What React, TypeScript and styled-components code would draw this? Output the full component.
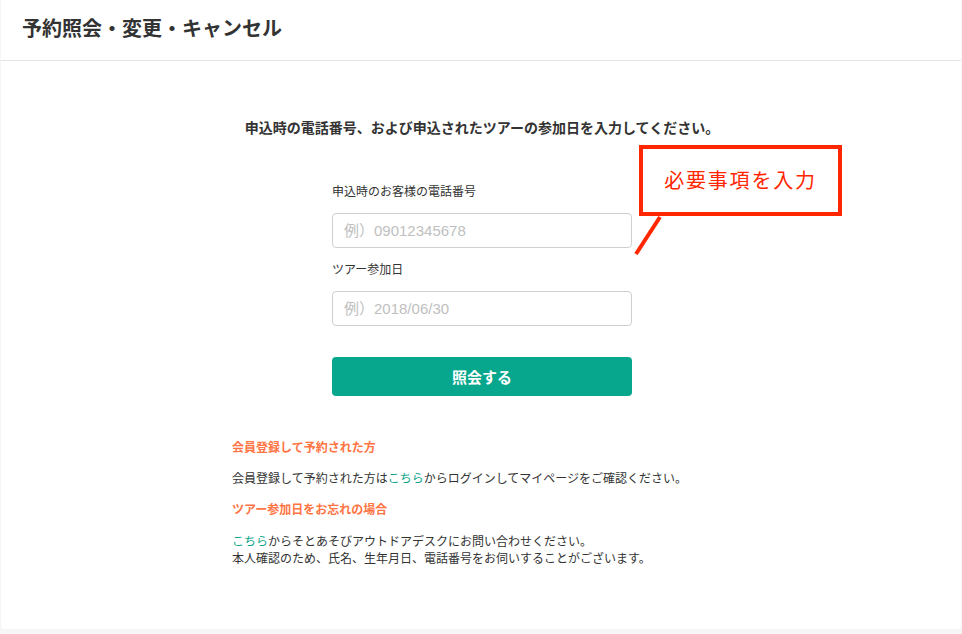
import React from "react";
import styled, { createGlobalStyle } from "styled-components";

const Global = createGlobalStyle`
  html, body { margin: 0; padding: 0; background: #f6f6f6; }
  body { font-family: "Liberation Sans", "Noto Sans CJK JP", sans-serif; color: #333; }
  * { box-sizing: border-box; }
`;

const Card = styled.div`
  margin: 0 1px;
  height: 629px;
  background: #fff;
  border-radius: 0 0 4px 4px;
`;

const Header = styled.header`
  height: 61px;
  border-bottom: 1px solid #e4e4e4;
  padding-left: 21px;
  display: flex;
  align-items: center;
`;

const Title = styled.h1`
  margin: 0 0 5px;
  font-size: 20px;
  font-weight: 700;
  color: #333;
  letter-spacing: 0px;
`;

const Main = styled.main`
  padding-top: 57px;
  padding-left: 2px;
  display: flex;
  flex-direction: column;
  align-items: center;
`;

const Lead = styled.p`
  margin: 0;
  font-size: 14px;
  line-height: 20px;
  font-weight: 700;
  color: #333;
`;

const Form = styled.form`
  position: relative;
  width: 300px;
  margin-top: 45px;
  display: flex;
  flex-direction: column;
`;

const Label = styled.label<{ $gap?: number }>`
  font-size: 12px;
  line-height: 18px;
  color: #333;
  margin-top: ${(p) => p.$gap ?? 0}px;
  margin-bottom: 12px;
`;

const Input = styled.input`
  height: 35px;
  width: 300px;
  border: 1px solid #cfcfcf;
  border-radius: 4px;
  padding: 0 11px;
  font-family: "Liberation Sans", "Noto Sans CJK JP", sans-serif;
  font-size: 15px;
  color: #333;
  outline: none;
  &::placeholder { color: #c0c0c0; }
`;

const Button = styled.button`
  margin-top: 31px;
  height: 39px;
  width: 300px;
  border: none;
  border-radius: 4px;
  background: #06a78c;
  color: #fff;
  font-family: "Liberation Sans", "Noto Sans CJK JP", sans-serif;
  font-size: 15px;
  font-weight: 700;
`;

const Callout = styled.div`
  position: absolute;
  left: 307px;
  top: -38px;
  width: 203px;
  height: 71px;
  border: 4px solid #ff2600;
  background: #fff;
  display: flex;
  align-items: center;
  justify-content: center;
  color: #ff2600;
  font-size: 20px;
  padding-bottom: 2px;
  letter-spacing: 1.8px;
`;

const Tail = styled.svg`
  position: absolute;
  left: 300px;
  top: 30px;
  overflow: visible;
`;

const Notes = styled.section`
  width: 500px;
  margin-top: 43px;
  display: flex;
  flex-direction: column;
`;

const NoteHead = styled.h2<{ $gap?: number }>`
  margin: ${(p) => p.$gap ?? 0}px 0 0;
  font-size: 12px;
  line-height: 18px;
  font-weight: 700;
  color: #ff7443;
`;

const NoteText = styled.p<{ $gap?: number }>`
  margin: ${(p) => p.$gap ?? 0}px 0 0;
  font-size: 12px;
  line-height: 17.5px;
  color: #333;
`;

const Link = styled.a`
  color: #0ea58a;
  text-decoration: none;
`;

export default function App() {
  return (
    <>
      <Global />
      <Card>
        <Header>
          <Title>予約照会・変更・キャンセル</Title>
        </Header>
        <Main>
          <Lead>申込時の電話番号、および申込されたツアーの参加日を入力してください。</Lead>
          <Form onSubmit={(e) => e.preventDefault()}>
            <Label>申込時のお客様の電話番号</Label>
            <Input placeholder="例）09012345678" />
            <Label $gap={13}>ツアー参加日</Label>
            <Input placeholder="例）2018/06/30" />
            <Button type="submit">照会する</Button>
            <Tail width="40" height="45">
              <line x1="28" y1="4" x2="4" y2="41" stroke="#ff2600" strokeWidth="4" />
            </Tail>
            <Callout>必要事項を入力</Callout>
          </Form>
          <Notes>
            <NoteHead>会員登録して予約された方</NoteHead>
            <NoteText $gap={14}>
              会員登録して予約された方は<Link href="#">こちら</Link>からログインしてマイページをご確認ください。
            </NoteText>
            <NoteHead $gap={12}>ツアー参加日をお忘れの場合</NoteHead>
            <NoteText $gap={15}>
              <Link href="#">こちら</Link>からそとあそびアウトドアデスクにお問い合わせください。
              <br />
              本人確認のため、氏名、生年月日、電話番号をお伺いすることがございます。
            </NoteText>
          </Notes>
        </Main>
      </Card>
    </>
  );
}
